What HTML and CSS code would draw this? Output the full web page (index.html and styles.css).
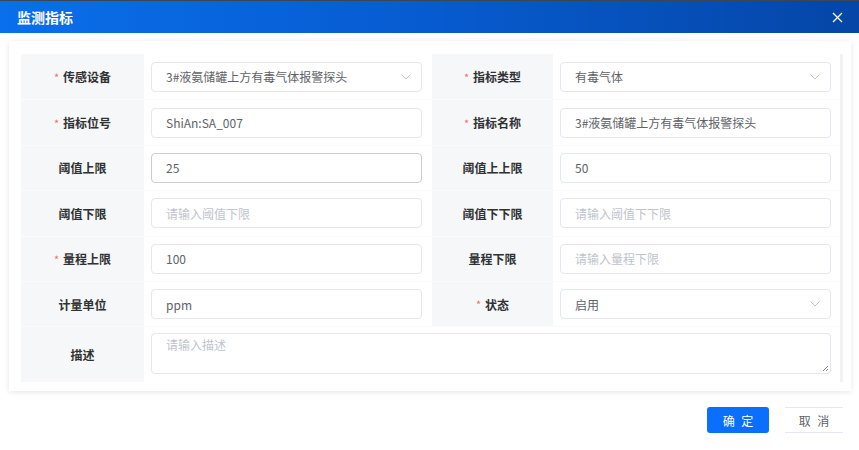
FILE: index.html
```html
<!DOCTYPE html>
<html lang="zh">
<head>
<meta charset="utf-8">
<title>监测指标</title>
<link rel="stylesheet" href="styles.css">
</head>
<body>
<div class="dialog">
  <div class="header">
    <span class="title">监测指标</span>
    <svg class="close" width="11" height="11" viewBox="0 0 11 11"><path d="M1 1L10 10M10 1L1 10" stroke="#fff" stroke-width="1.3" fill="none"/></svg>
  </div>
  <div class="body">
    <div class="card">
      <div class="table">
        <div class="row">
          <div class="label"><span class="req">*</span>传感设备</div>
          <div class="cell"><div class="input select"><span>3#液氨储罐上方有毒气体报警探头</span><svg class="arrow" width="10" height="6" viewBox="0 0 10 6"><path d="M0.5 0.5L5 5L9.5 0.5" stroke="#c0c4cc" stroke-width="1" fill="none"/></svg></div></div>
          <div class="label"><span class="req">*</span>指标类型</div>
          <div class="cell r"><div class="input select"><span>有毒气体</span><svg class="arrow" width="10" height="6" viewBox="0 0 10 6"><path d="M0.5 0.5L5 5L9.5 0.5" stroke="#c0c4cc" stroke-width="1" fill="none"/></svg></div></div>
        </div>
        <div class="row">
          <div class="label"><span class="req">*</span>指标位号</div>
          <div class="cell"><div class="input"><span>ShiAn:SA_007</span></div></div>
          <div class="label"><span class="req">*</span>指标名称</div>
          <div class="cell r"><div class="input"><span>3#液氨储罐上方有毒气体报警探头</span></div></div>
        </div>
        <div class="row">
          <div class="label">阈值上限</div>
          <div class="cell"><div class="input focus"><span>25</span></div></div>
          <div class="label">阈值上上限</div>
          <div class="cell r"><div class="input"><span>50</span></div></div>
        </div>
        <div class="row">
          <div class="label">阈值下限</div>
          <div class="cell"><div class="input"><span class="ph">请输入阈值下限</span></div></div>
          <div class="label">阈值下下限</div>
          <div class="cell r"><div class="input"><span class="ph">请输入阈值下下限</span></div></div>
        </div>
        <div class="row">
          <div class="label"><span class="req">*</span>量程上限</div>
          <div class="cell"><div class="input"><span>100</span></div></div>
          <div class="label">量程下限</div>
          <div class="cell r"><div class="input"><span class="ph">请输入量程下限</span></div></div>
        </div>
        <div class="row">
          <div class="label">计量单位</div>
          <div class="cell"><div class="input"><span>ppm</span></div></div>
          <div class="label"><span class="req">*</span>状态</div>
          <div class="cell r"><div class="input select"><span>启用</span><svg class="arrow" width="10" height="6" viewBox="0 0 10 6"><path d="M0.5 0.5L5 5L9.5 0.5" stroke="#c0c4cc" stroke-width="1" fill="none"/></svg></div></div>
        </div>
        <div class="row tall">
          <div class="label">描述</div>
          <div class="cell wide"><div class="textarea"><span class="ph">请输入描述</span><svg class="grip" width="7" height="7" viewBox="0 0 7 7"><path d="M1 6L6 1M4 6L6 4" stroke="#777" stroke-width="0.9" fill="none"/></svg></div></div>
        </div>
      </div>
    </div>
    <div class="footer">
      <button class="btn primary">确 定</button>
      <button class="btn plain">取 消</button>
    </div>
  </div>
</div>
</body>
</html>
```
FILE: styles.css
```css
html, body {
  margin: 0;
  padding: 0;
  background: #fff;
  font-family: "Noto Sans CJK SC", "Noto Sans", sans-serif;
}
.dialog {
  width: 859px;
  height: 450px;
  overflow: hidden;
  background: #fff;
}
.header {
  height: 32px;
  border-top: 1px solid #3a4656;
  background: linear-gradient(90deg, #0a6fea 0%, #075bd0 50%, #0546a6 100%);
  display: flex;
  align-items: center;
  justify-content: space-between;
  padding: 0 16px 0 17px;
}
.title {
  color: #fff;
  font-size: 14px;
  font-weight: 700;
  line-height: 1;
}
.close {
  display: block;
}
.body {
  padding: 8px 8px 0 9px;
}
.card {
  background: #fff;
  box-shadow: 0 1px 6px rgba(0, 0, 0, 0.10);
  padding: 13px 8px 9px 12px;
}
.table {
  display: flex;
  flex-direction: column;
  border-right: 3px solid #f1f2f6;
}
.row {
  display: grid;
  grid-template-columns: 123px 288px 121px 287px;
  height: 45.4px;
  border-top: 1px solid #fbfbfc;
  box-sizing: border-box;
}
.row:first-child {
  border-top: none;
}
.row.tall {
  grid-template-columns: 123px 696px;
  height: 56px;
}
.label {
  background: #f6f7f9;
  display: flex;
  align-items: center;
  justify-content: center;
  font-size: 12px;
  font-weight: 700;
  color: #303133;
}
.req {
  color: #f56c6c;
  font-weight: 400;
  margin-right: 4px;
  font-size: 11px;
}
.cell {
  display: flex;
  align-items: center;
  padding: 0 10px 0 7px;
}
.cell.r {
  padding: 0 9px 0 7px;
}
.cell.wide {
  align-items: flex-start;
  padding: 6px 9px 0 7px;
}
.input {
  flex: 1;
  height: 30px;
  box-sizing: border-box;
  border: 1px solid #e4e7ed;
  border-radius: 4px;
  display: flex;
  align-items: center;
  justify-content: space-between;
  padding: 0 10px 0 14px;
  font-size: 12px;
  color: #606266;
}
.input.focus {
  border-color: #c8ccd4;
}
.ph {
  color: #c0c4cc;
}
.arrow {
  display: block;
}
.textarea {
  flex: 1;
  height: 41px;
  box-sizing: border-box;
  border: 1px solid #e4e7ed;
  border-radius: 4px;
  position: relative;
  padding: 3px 14px;
  font-size: 12px;
  line-height: 16px;
}
.grip {
  position: absolute;
  right: 1px;
  bottom: 1px;
}
.footer {
  display: flex;
  justify-content: flex-end;
  gap: 16px;
  padding: 16px 8px 0 0;
}
.btn {
  font-family: "Noto Sans CJK SC", sans-serif;
  font-size: 12px;
  height: 26px;
  border-radius: 3px;
  cursor: pointer;
  letter-spacing: 2px;
  padding: 0 0 0 2px;
}
.btn.primary {
  width: 62px;
  background: #0a6ffd;
  color: #fff;
  border: none;
}
.btn.plain {
  width: 58px;
  background: #fff;
  color: #606266;
  border: none;
  border-top: 1px solid #e4e7ed;
  border-bottom: 1px solid #e4e7ed;
  border-radius: 0;
}
```
